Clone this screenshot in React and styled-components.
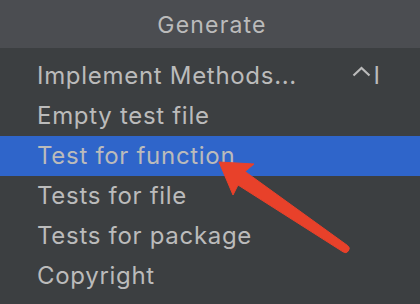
import React from "react";
import styled, { createGlobalStyle } from "styled-components";

const Global = createGlobalStyle`
  html, body { margin: 0; padding: 0; background: #3c3f41; }
  body { font-family: Inter, "Liberation Sans", sans-serif; }
`;

const Popup = styled.div`
  position: relative;
  width: 420px;
  height: 304px;
  background: #3c3f41;
  overflow: hidden;
  display: flex;
  flex-direction: column;
`;

const Header = styled.div`
  height: 48px;
  background: #4b4d51;
  display: flex;
  align-items: center;
  justify-content: center;
  color: #bbbbbb;
  font-size: 23px;
  letter-spacing: 1.2px;
  line-height: 48px;
  padding-left: 4px;
  padding-top: 1px;
  box-sizing: border-box;
`;

const List = styled.div`
  display: flex;
  flex-direction: column;
  padding-top: 8px;
`;

const Row = styled.div`
  height: 40px;
  display: flex;
  align-items: center;
  justify-content: space-between;
  padding: 0 40px 0 37px;
  background: ${(p) => (p.$selected ? "#2f65ca" : "transparent")};
  color: #bbbbbb;
  font-size: 24px;
  letter-spacing: 0.7px;
  line-height: 40px;
`;

const Shortcut = styled.span`
  display: flex;
  align-items: center;
  gap: 3px;
  color: #bbbbbb;
  font-size: 24px;
  letter-spacing: 0;
`;

const CaretIcon = styled.svg`
  display: block;
  margin-top: -9px;
`;

const Arrow = styled.svg`
  position: absolute;
  left: 0;
  top: 0;
  pointer-events: none;
`;

const items = [
  { label: "Implement Methods...", shortcut: "I" },
  { label: "Empty test file" },
  { label: "Test for function", selected: true },
  { label: "Tests for file" },
  { label: "Tests for package" },
  { label: "Copyright" },
];

export default function App() {
  return (
    <>
      <Global />
      <Popup>
        <Header>Generate</Header>
        <List>
          {items.map((it) => (
            <Row key={it.label} $selected={it.selected}>
              <span>{it.label}</span>
              {it.shortcut && (
                <Shortcut>
                  <CaretIcon width="19" height="11" viewBox="0 0 19 11">
                    <polyline
                      points="1.5,9.5 9.5,2 17.5,9.5"
                      fill="none"
                      stroke="#bbbbbb"
                      strokeWidth="2.2"
                      strokeLinecap="butt"
                      strokeLinejoin="miter"
                    />
                  </CaretIcon>
                  {it.shortcut}
                </Shortcut>
              )}
            </Row>
          ))}
        </List>
        <Arrow width="420" height="304" viewBox="0 0 420 304">
          <path
            d="M219 162 L254 164 L245 171.5 L347.5 245.5 A3.8 3.8 0 0 1 343 251.8 L238 185 L233 195 Z"
            fill="#e8412a"
            stroke="#e8412a"
            strokeWidth="1"
            strokeLinejoin="round"
          />
        </Arrow>
      </Popup>
    </>
  );
}
